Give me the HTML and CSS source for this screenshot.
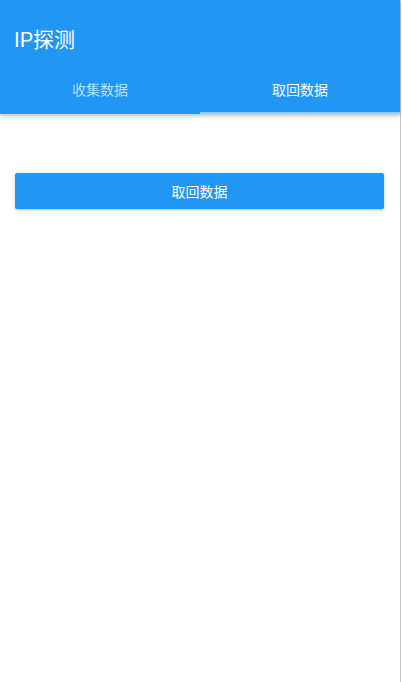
FILE: index.html
```html
<!DOCTYPE html>
<html lang="zh">
<head>
<meta charset="utf-8">
<title>IP探测</title>
<link rel="stylesheet" href="styles.css">
</head>
<body>
<div class="page">
  <header class="appbar">
    <div class="toolbar"><h1 class="title">IP探测</h1></div>
    <nav class="tabs">
      <div class="tab">收集数据</div>
      <div class="tab active">取回数据</div>
    </nav>
  </header>
  <main class="content">
    <button class="btn">取回数据</button>
  </main>
</div>
</body>
</html>
```
FILE: styles.css
```css
html, body {
  margin: 0;
  padding: 0;
  background: #fff;
}
body {
  font-family: Roboto, "Noto Sans CJK SC", sans-serif;
}
.page {
  width: 400px;
  min-height: 682px;
  border-right: 1px solid #c8c8c8;
  box-sizing: content-box;
}
.appbar {
  background: #2196f3;
  color: #fff;
  box-shadow: 0 2px 4px rgba(0,0,0,0.25);
  position: relative;
}
.toolbar {
  height: 56px;
  padding-top: 10px;
  padding-left: 14px;
  display: flex;
  align-items: center;
}
.title {
  margin: 0;
  font-size: 21px;
  font-weight: 400;
}
.tabs {
  display: flex;
  height: 48px;
}
.tab {
  flex: 1;
  display: flex;
  align-items: center;
  justify-content: center;
  font-size: 14px;
  color: rgba(255,255,255,0.7);
  border-bottom: 2px solid transparent;
  box-sizing: border-box;
}
.tab.active {
  color: #fff;
  border-bottom-color: #90caf9;
}
.content {
  padding: 59px 16px 0 15px;
}
.btn {
  display: block;
  width: 369px;
  height: 36px;
  border: none;
  border-radius: 2px;
  background: #2196f3;
  color: #fff;
  font-family: Roboto, "Noto Sans CJK SC", sans-serif;
  font-size: 14px;
  box-shadow: 0 1px 3px rgba(0,0,0,0.25);
  padding: 0;
}
```
